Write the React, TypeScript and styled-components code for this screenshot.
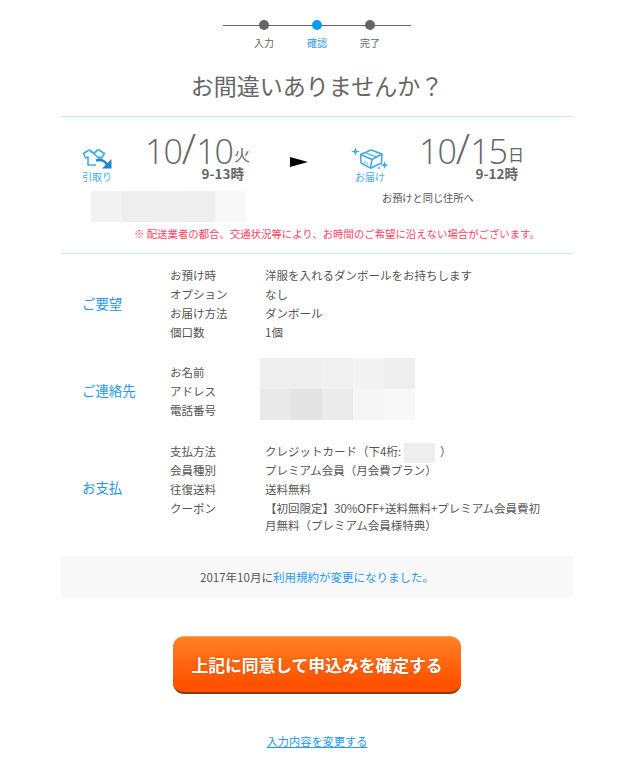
import React from "react";
import styled, { createGlobalStyle } from "styled-components";

const GlobalStyle = createGlobalStyle`
  html, body {
    margin: 0;
    padding: 0;
    background: #fff;
    overflow: hidden;
  }
  body {
    font-family: "Noto Sans CJK JP", "Noto Sans", "Liberation Sans", sans-serif;
    color: #555;
  }
`;

const steps = [
  { label: "入力", active: false },
  { label: "確認", active: true },
  { label: "完了", active: false },
];

const sections = [
  {
    title: "ご要望",
    rows: [
      { label: "お預け時", value: "洋服を入れるダンボールをお持ちします" },
      { label: "オプション", value: "なし" },
      { label: "お届け方法", value: "ダンボール" },
      { label: "個口数", value: "1個" },
    ],
  },
  {
    title: "ご連絡先",
    mosaic: true,
    rows: [
      { label: "お名前", value: "" },
      { label: "アドレス", value: "" },
      { label: "電話番号", value: "" },
    ],
  },
  {
    title: "お支払",
    rows: [
      { label: "支払方法", value: "card" },
      { label: "会員種別", value: "プレミアム会員（月会費プラン）" },
      { label: "往復送料", value: "送料無料" },
      {
        label: "クーポン",
        compact: true,
        value: "【初回限定】30%OFF+送料無料+プレミアム会員費初月無料（プレミアム会員様特典）",
      },
    ],
  },
];

const addressCells = ["#f3f3f3", "#eeeeee", "#efefef", "#eeeeee", "#f8f8f8"];
const contactCells = [
  "#eeeeee", "#eeeeee", "#f0f0f0", "#f3f3f3", "#eeeeee",
  "#e9e9e9", "#e4e4e4", "#ebebeb", "#f6f6f6", "#f8f8f8",
];

function ShirtIcon() {
  return (
    <svg width="32" height="24" viewBox="0 0 32 24" fill="none">
      <path
        d="M8 5 L2.5 8.5 L4.5 13 L7 12 L7 20 L15 20 M18 13.5 L18 12 L20.5 13 L23.5 8.5 L18 5 L16 5 C15 8.5 10 8.5 9 5 Z"
        stroke="#3fa9e6"
        strokeWidth="1.6"
        strokeLinejoin="round"
      />
      <path d="M15 15.5 C20 14 24 16 26.5 20" stroke="#1c86d1" strokeWidth="2.6" />
      <path d="M30.5 14 L30.5 23.5 L21 23.5 Z" fill="#1c86d1" />
    </svg>
  );
}

function BoxIcon() {
  return (
    <svg width="38" height="26" viewBox="0 0 38 26" fill="none">
      <path d="M4.5 4 L5.6 7.4 L9 8.5 L5.6 9.6 L4.5 13 L3.4 9.6 L0 8.5 L3.4 7.4 Z" fill="#3fa9e6" />
      <path d="M33.5 18 L34.5 21 L37.5 22 L34.5 23 L33.5 26 L32.5 23 L29.5 22 L32.5 21 Z" fill="#3fa9e6" />
      <path d="M28 23 L28.5 24.5 L30 25 L28.5 25.5 L28 27 L27.5 25.5 L26 25 L27.5 24.5 Z" fill="#3fa9e6" />
      <path
        d="M9.5 11.5 L20 7 L31 11 L21 16.5 Z M9.5 11.5 L10 20 L19.5 25.2 L30.5 20 L31 11 M21 16.5 L19.5 25.2"
        stroke="#3fa9e6"
        strokeWidth="1.5"
        strokeLinejoin="round"
      />
      <path d="M14 9.5 L25 14" stroke="#3fa9e6" strokeWidth="1.3" />
      <path d="M13 17.5 L17 19.5 L17 22 L13 20 Z" fill="#a8d8f4" />
    </svg>
  );
}

export default function App() {
  return (
    <Page>
      <GlobalStyle />
      <Stepper>
        {steps.map((step) => (
          <Step key={step.label}>
            <Dot $active={step.active} />
            <StepLabel $active={step.active}>{step.label}</StepLabel>
          </Step>
        ))}
      </Stepper>

      <Title>お間違いありませんか？</Title>

      <Schedule>
        <Trips>
          <Trip $indent={20} $gap={32}>
            <TripIcon>
              <ShirtIcon />
              <TripIconLabel>引取り</TripIconLabel>
            </TripIcon>
            <TripDate>
              <DateLine>
                <DateNumber>10</DateNumber>
                <DateSlash>/</DateSlash>
                <DateNumber>10</DateNumber>
                <DateWeekday>火</DateWeekday>
              </DateLine>
              <DateTime>9-13時</DateTime>
            </TripDate>
          </Trip>
          <Arrow />
          <Trip $indent={43} $gap={30}>
            <TripIcon>
              <BoxIcon />
              <TripIconLabel>お届け</TripIconLabel>
            </TripIcon>
            <TripDate>
              <DateLine>
                <DateNumber>10</DateNumber>
                <DateSlash>/</DateSlash>
                <DateNumber>15</DateNumber>
                <DateWeekday>日</DateWeekday>
              </DateLine>
              <DateTime>9-12時</DateTime>
            </TripDate>
          </Trip>
        </Trips>
        <Addresses>
          <AddressMosaic>
            {addressCells.map((color, i) => (
              <MosaicCell key={i} $color={color} />
            ))}
          </AddressMosaic>
          <SameAddress>お預けと同じ住所へ</SameAddress>
        </Addresses>
        <Warning>※ 配送業者の都合、交通状況等により、お時間のご希望に沿えない場合がございます。</Warning>
      </Schedule>

      <Details>
        {sections.map((section) => (
          <Section key={section.title}>
            <SectionTitle>{section.title}</SectionTitle>
            <Rows>
              {section.mosaic && (
                <ContactMosaic>
                  {contactCells.map((color, i) => (
                    <MosaicCell key={i} $color={color} />
                  ))}
                </ContactMosaic>
              )}
              {section.rows.map((row) => (
                <Row key={row.label}>
                  <RowLabel>{row.label}</RowLabel>
                  <RowValue $compact={"compact" in row}>
                    {row.value === "card" ? (
                      <>
                        クレジットカード（下4桁:
                        <CardMosaic />）
                      </>
                    ) : (
                      row.value
                    )}
                  </RowValue>
                </Row>
              ))}
            </Rows>
          </Section>
        ))}
      </Details>

      <Notice>
        2017年10月に<NoticeLink>利用規約が変更になりました。</NoticeLink>
      </Notice>

      <ConfirmButton>上記に同意して申込みを確定する</ConfirmButton>
      <ChangeLink>入力内容を変更する</ChangeLink>
    </Page>
  );
}

const Page = styled.div`
  width: 512px;
  height: 758px;
  margin-left: 61px;
  display: flex;
  flex-direction: column;
  align-items: center;
  overflow: hidden;
`;

const Stepper = styled.div`
  width: 188px;
  margin-top: 20px;
  display: flex;
  justify-content: center;
  gap: 23px;
  background: linear-gradient(#666, #666) no-repeat 0 5px / 100% 1px;
`;

const Step = styled.div`
  width: 30px;
  display: flex;
  flex-direction: column;
  align-items: center;
`;

const Dot = styled.span<{ $active: boolean }>`
  width: 10px;
  height: 10px;
  border-radius: 50%;
  background: ${(p) => (p.$active ? "#0a9cf0" : "#666")};
`;

const StepLabel = styled.span<{ $active: boolean }>`
  margin-top: 5px;
  font-size: 10px;
  line-height: 15px;
  color: ${(p) => (p.$active ? "#2d9cec" : "#666")};
`;

const Title = styled.h1`
  margin: 19px 0 0;
  font-size: 23px;
  line-height: 32px;
  font-weight: 400;
  color: #666;
`;

const Schedule = styled.section`
  width: 100%;
  box-sizing: border-box;
  height: 138px;
  margin-top: 15px;
  border-top: 1px solid #c9e7f6;
  border-bottom: 1px solid #c9e7f6;
  display: flex;
  flex-direction: column;
`;

const Trips = styled.div`
  box-sizing: border-box;
  height: 74px;
  padding-top: 13px;
  display: grid;
  grid-template-columns: 229px 18px 1fr;
  align-items: start;
`;

const Trip = styled.div<{ $indent: number; $gap: number }>`
  padding-left: ${(p) => p.$indent}px;
  display: flex;
  align-items: flex-end;
  gap: ${(p) => p.$gap}px;
`;

const TripIcon = styled.div`
  display: flex;
  flex-direction: column;
  align-items: center;
`;

const TripIconLabel = styled.span`
  margin: 2px 0 -2px;
  font-size: 10px;
  line-height: 12px;
  color: #49ade8;
`;

const TripDate = styled.div`
  display: flex;
  flex-direction: column;
  align-items: flex-end;
`;

const DateLine = styled.div`
  height: 35px;
  line-height: 36px;
  white-space: nowrap;
  color: #666;
`;

const DateNumber = styled.span`
  font-family: "Open Sans", sans-serif;
  font-size: 34px;
  font-weight: 300;
  letter-spacing: -1px;
`;

const DateSlash = styled.span`
  font-family: "Open Sans", sans-serif;
  font-size: 42px;
  line-height: 36px;
  font-weight: 300;
`;

const DateWeekday = styled.span`
  margin-left: 1px;
  font-size: 16px;
  vertical-align: 3px;
`;

const DateTime = styled.span`
  padding-right: 6px;
  font-size: 13.5px;
  line-height: 16px;
  font-weight: 700;
  color: #666;
`;

const Arrow = styled.span`
  width: 0;
  height: 0;
  margin-top: 27px;
  border-left: 18px solid #000;
  border-top: 5px solid transparent;
  border-bottom: 5px solid transparent;
`;

const Addresses = styled.div`
  display: flex;
  align-items: flex-start;
`;

const AddressMosaic = styled.div`
  display: grid;
  grid-template-columns: repeat(5, 31px);
  grid-auto-rows: 31px;
  margin-left: 30px;
`;

const MosaicCell = styled.span<{ $color: string }>`
  background: ${(p) => p.$color};
`;

const SameAddress = styled.span`
  margin-left: 136px;
  margin-top: -1px;
  font-size: 10.2px;
  line-height: 16px;
`;

const Warning = styled.p`
  margin: 5px 0 0 73px;
  font-size: 10.4px;
  line-height: 14px;
  white-space: nowrap;
  color: #ff4466;
`;

const Details = styled.div`
  width: 100%;
  margin-top: 12px;
  display: flex;
  flex-direction: column;
  gap: 21px;
`;

const Section = styled.section`
  display: grid;
  grid-template-columns: 109px 1fr;
  align-items: center;

  &:last-child {
    margin-top: 1px;
  }
`;

const SectionTitle = styled.h2`
  margin: 0 0 3px 21px;
  font-size: 13.4px;
  line-height: 20px;
  font-weight: 400;
  color: #2398ec;
`;

const Rows = styled.div`
  position: relative;
  display: flex;
  flex-direction: column;
`;

const ContactMosaic = styled.div`
  position: absolute;
  left: 90px;
  top: -5px;
  display: grid;
  grid-template-columns: repeat(5, 31px);
  grid-auto-rows: 31px;
`;

const Row = styled.div`
  display: grid;
  grid-template-columns: 95px 285px;
  font-size: 11.5px;
  line-height: 19px;
`;

const RowLabel = styled.span`
  color: #555;
`;

const RowValue = styled.span<{ $compact: boolean }>`
  color: #555;
  line-height: ${(p) => (p.$compact ? "17px" : "19px")};
  padding-top: ${(p) => (p.$compact ? "1px" : "0")};
`;

const CardMosaic = styled.span`
  display: inline-block;
  width: 31px;
  height: 20px;
  margin: -2px 5px -2px 3px;
  vertical-align: middle;
  background: #eee;
`;

const Notice = styled.div`
  width: 100%;
  height: 42px;
  margin-top: 22px;
  background: #f8f8f8;
  display: flex;
  align-items: center;
  justify-content: center;
  font-size: 11.5px;
  color: #555;
`;

const NoticeLink = styled.span`
  color: #2398ec;
`;

const ConfirmButton = styled.button`
  width: 288px;
  height: 58px;
  margin-top: 38px;
  padding: 0;
  border: 0;
  border-top: 1px solid #f0a060;
  border-bottom: 2px solid #8a3a10;
  border-radius: 11px;
  background: linear-gradient(#ff8222, #ff5100 85%);
  font-family: inherit;
  font-size: 16.8px;
  font-weight: 700;
  color: #fff;
  text-shadow: 0 0 2px rgba(160, 60, 0, 0.6);
`;

const ChangeLink = styled.a`
  margin-top: 39px;
  font-size: 11.2px;
  line-height: 16px;
  color: #2398ec;
  text-decoration: underline;
`;
